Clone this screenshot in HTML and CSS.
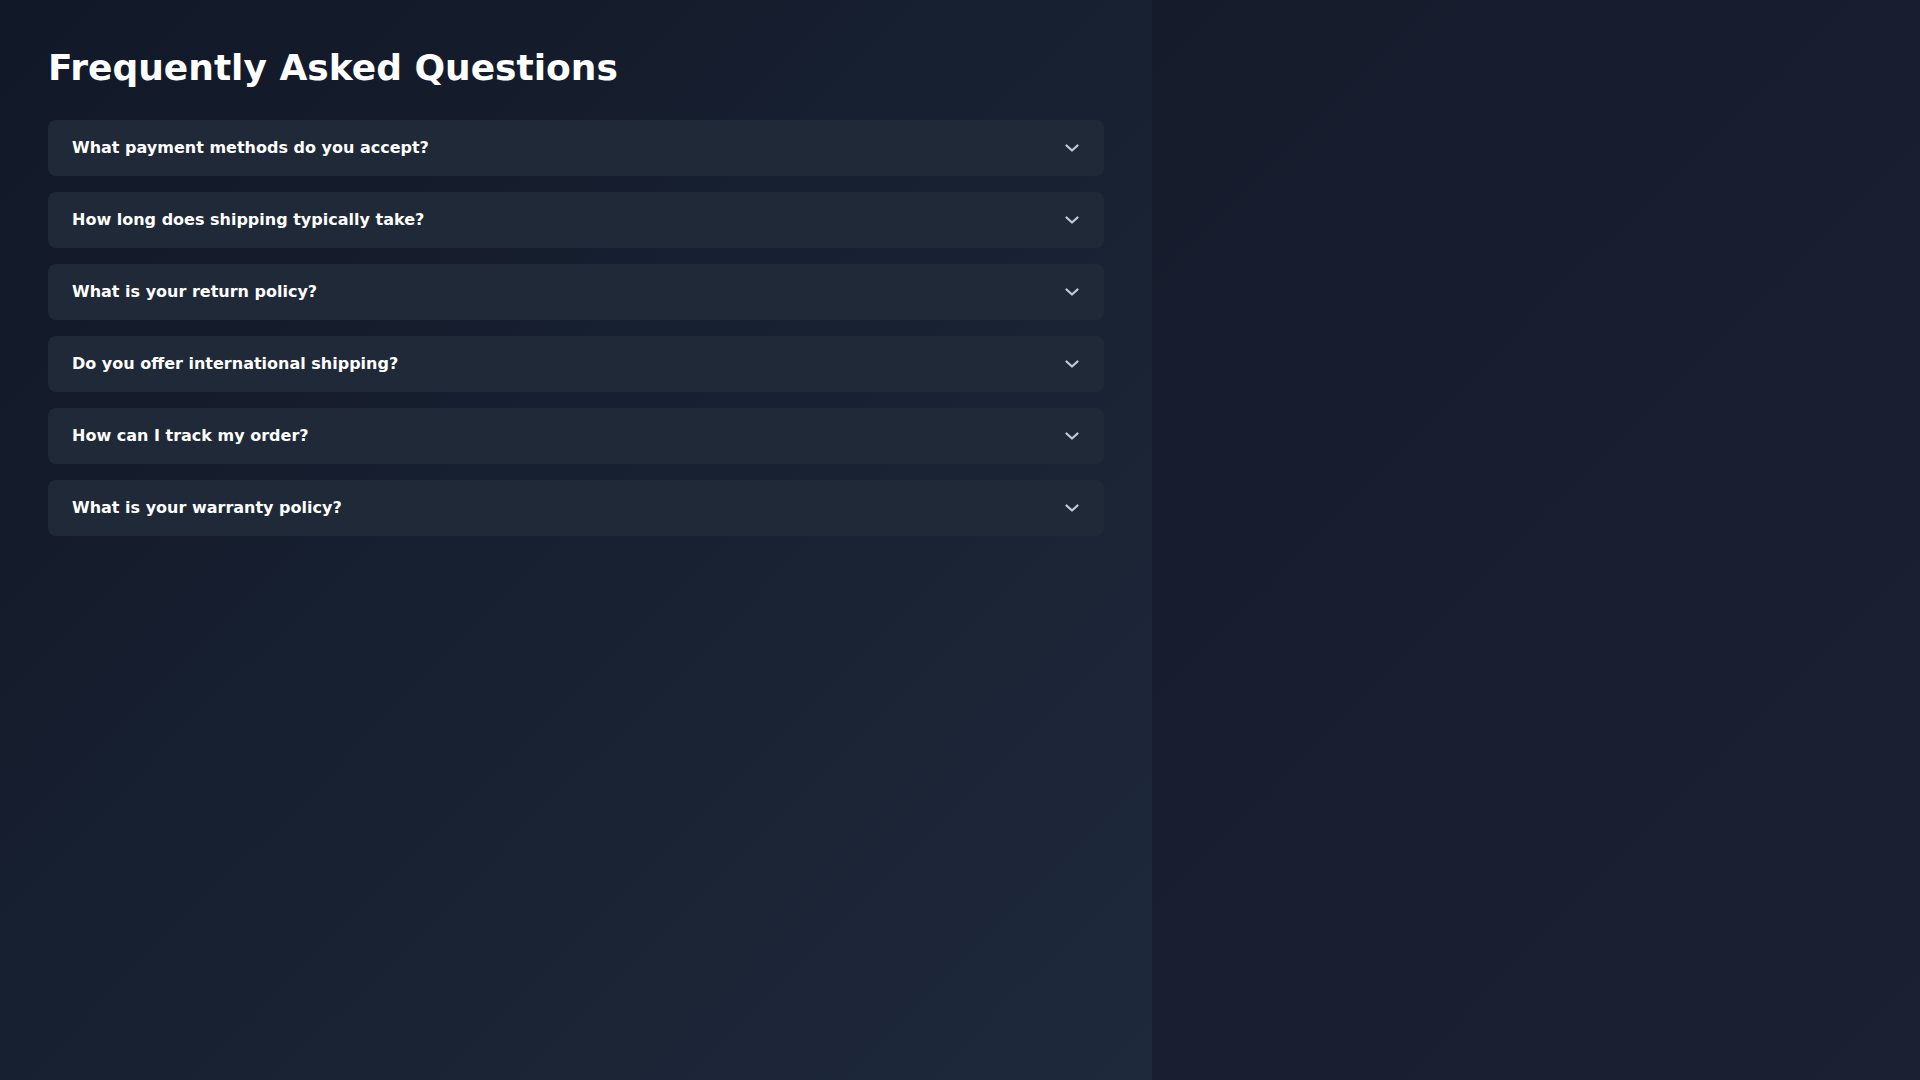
FILE: index.html
```html
<!DOCTYPE html>
<html lang="en">
<head>
<meta charset="utf-8">
<title>FAQ</title>
<link rel="stylesheet" href="styles.css">
</head>
<body>
<main class="faq">
  <h1 class="faq-title">Frequently Asked Questions</h1>
  <div class="faq-list">
    <div class="faq-item">
      <span class="faq-q">What payment methods do you accept?</span>
      <svg class="chev" viewBox="0 0 16 16" width="16" height="16"><polyline points="2.5,5.5 8,10.5 13.5,5.5"/></svg>
    </div>
    <div class="faq-item">
      <span class="faq-q">How long does shipping typically take?</span>
      <svg class="chev" viewBox="0 0 16 16" width="16" height="16"><polyline points="2.5,5.5 8,10.5 13.5,5.5"/></svg>
    </div>
    <div class="faq-item">
      <span class="faq-q">What is your return policy?</span>
      <svg class="chev" viewBox="0 0 16 16" width="16" height="16"><polyline points="2.5,5.5 8,10.5 13.5,5.5"/></svg>
    </div>
    <div class="faq-item">
      <span class="faq-q">Do you offer international shipping?</span>
      <svg class="chev" viewBox="0 0 16 16" width="16" height="16"><polyline points="2.5,5.5 8,10.5 13.5,5.5"/></svg>
    </div>
    <div class="faq-item">
      <span class="faq-q">How can I track my order?</span>
      <svg class="chev" viewBox="0 0 16 16" width="16" height="16"><polyline points="2.5,5.5 8,10.5 13.5,5.5"/></svg>
    </div>
    <div class="faq-item">
      <span class="faq-q">What is your warranty policy?</span>
      <svg class="chev" viewBox="0 0 16 16" width="16" height="16"><polyline points="2.5,5.5 8,10.5 13.5,5.5"/></svg>
    </div>
  </div>
</main>
</body>
</html>
```

FILE: styles.css
```css
html {
  min-height: 100%;
  background: linear-gradient(135deg, #111827 0%, #1b2133 100%);
}
body {
  margin: 0;
  font-family: "DejaVu Sans", sans-serif;
  color: #ffffff;
}
.faq {
  width: 60%;
  min-height: 100vh;
  box-sizing: border-box;
  padding: 48px;
  background: linear-gradient(135deg, #111827 0%, #1e293b 100%);
}
.faq-title {
  margin: 0 0 32px;
  font-size: 36px;
  font-weight: 700;
  line-height: 40px;
}
.faq-list {
  display: flex;
  flex-direction: column;
  gap: 16px;
}
.faq-item {
  height: 56px;
  box-sizing: border-box;
  padding: 0 24px;
  border-radius: 8px;
  background: #1f2937;
  display: flex;
  align-items: center;
  justify-content: space-between;
}
.faq-q {
  font-size: 16px;
  font-weight: 700;
  padding-bottom: 2px;
}
.chev {
  fill: none;
  stroke: #c8cadb;
  stroke-width: 2.2;
  stroke-linecap: round;
  stroke-linejoin: round;
}
```
